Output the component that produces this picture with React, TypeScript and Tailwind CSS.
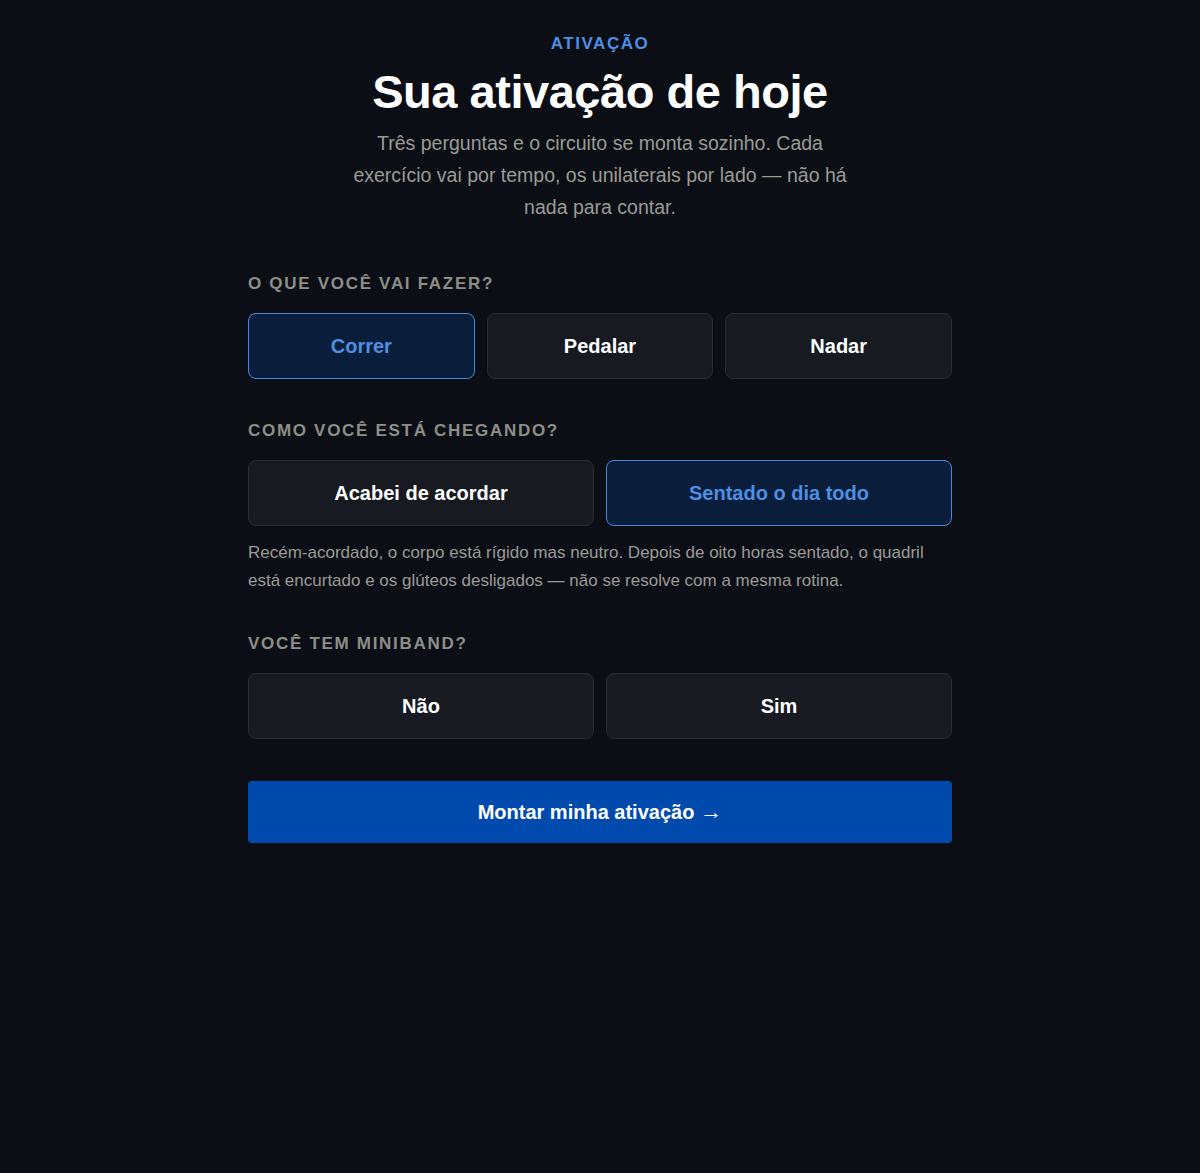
import { useState } from 'react';

const FONT = { fontFamily: '"Liberation Sans", Inter, Arial, sans-serif' };

const ACTIVITIES = ['Correr', 'Pedalar', 'Nadar'];
const STATES = ['Acabei de acordar', 'Sentado o dia todo'];
const BAND = ['Não', 'Sim'];

export default function App() {
  const [activity, setActivity] = useState('Correr');
  const [state, setState] = useState('Sentado o dia todo');
  const [band, setBand] = useState<string | null>(null);

  return (
    <div className="min-h-[1173px] bg-[#0b0e15] text-white" style={FONT}>
      <div className="mx-auto w-[704px] pt-[34px]">
        <header className="flex flex-col items-center text-center">
          <div className="text-[17px] font-bold leading-[20px] tracking-[0.09em] text-[#4e8ee4]">
            ATIVAÇÃO
          </div>
          <h1 className="mt-[10px] text-[47px] font-bold leading-[56px] tracking-[-0.01em]">
            Sua ativação de hoje
          </h1>
          <p className="mt-[7px] w-[510px] text-[19.5px] leading-[32px] text-[#9b9b95]">
            Três perguntas e o circuito se monta sozinho. Cada exercício vai por tempo, os
            unilaterais por lado — não há nada para contar.
          </p>
        </header>

        <Section title="O QUE VOCÊ VAI FAZER?" className="mt-[50px]">
          <div className="grid grid-cols-3 gap-3">
            {ACTIVITIES.map((a) => (
              <Choice key={a} label={a} selected={activity === a} onClick={() => setActivity(a)} />
            ))}
          </div>
        </Section>

        <Section title="COMO VOCÊ ESTÁ CHEGANDO?" className="mt-[41px]">
          <div className="grid grid-cols-2 gap-3">
            {STATES.map((s) => (
              <Choice key={s} label={s} selected={state === s} onClick={() => setState(s)} />
            ))}
          </div>
          <p className="mt-[13px] text-[17px] leading-[28px] text-[#9b9b95]">
            Recém-acordado, o corpo está rígido mas neutro. Depois de oito horas sentado, o quadril
            está encurtado e os glúteos desligados — não se resolve com a mesma rotina.
          </p>
        </Section>

        <Section title="VOCÊ TEM MINIBAND?" className="mt-[38px]">
          <div className="grid grid-cols-2 gap-3">
            {BAND.map((b) => (
              <Choice key={b} label={b} selected={band === b} onClick={() => setBand(b)} />
            ))}
          </div>
        </Section>

        <button className="mt-[42px] flex h-[62px] w-full items-center justify-center gap-[6px] rounded-[4px] bg-[#004aad] text-[20px] font-bold text-white">
          <span>Montar minha ativação</span>
          <span className="text-[22px] font-black leading-none">→</span>
        </button>
      </div>
    </div>
  );
}

function Section({
  title,
  className,
  children,
}: {
  title: string;
  className?: string;
  children: React.ReactNode;
}) {
  return (
    <section className={className}>
      <h2 className="mb-[18px] text-[17px] font-bold leading-[22px] tracking-[0.1em] text-[#8e8e88]">
        {title}
      </h2>
      {children}
    </section>
  );
}

function Choice({
  label,
  selected,
  onClick,
}: {
  label: string;
  selected: boolean;
  onClick: () => void;
}) {
  return (
    <button
      onClick={onClick}
      className={
        selected
          ? 'flex h-[66px] items-center justify-center rounded-[8px] border border-[#4a88dc] bg-[#0a1d3b] text-[20px] font-bold text-[#4f8fe2]'
          : 'flex h-[66px] items-center justify-center rounded-[8px] border border-[#2a2d35] bg-[#171a21] text-[20px] font-bold text-white'
      }
    >
      {label}
    </button>
  );
}
